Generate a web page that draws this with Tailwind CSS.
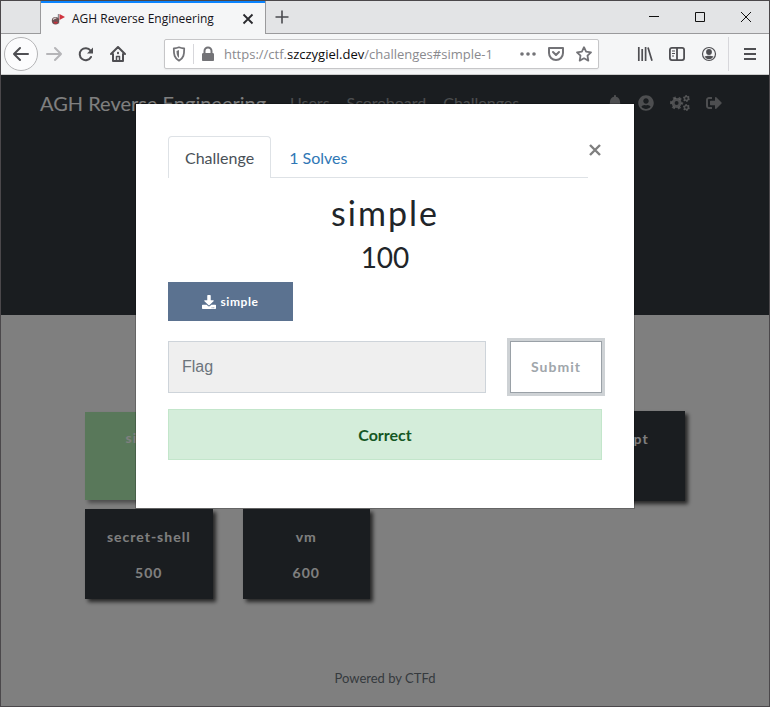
<!DOCTYPE html>
<html lang="en">
<head>
<meta charset="utf-8">
<meta name="viewport" content="width=device-width, initial-scale=1">
<title>AGH Reverse Engineering</title>
<script src="https://cdn.jsdelivr.net/npm/@tailwindcss/browser@4"></script>
</head>
<body class="flex min-h-screen flex-col border border-[#4b484b] bg-white font-['Lato',sans-serif] text-base text-[#212529]">

<!-- Browser chrome -->
<header class="font-['Open_Sans',sans-serif]">
  <div class="flex h-[33px] bg-[#e3e4e6]">
    <div class="w-10 border-r border-b border-[#9a9a9c]"></div>
    <div class="flex w-56 items-center border-t-2 border-[#0a84ff] bg-[#f5f6f7] pr-[7px] pl-[9px]">
      <svg class="mr-[6px] h-4 w-4" viewBox="0 0 16 16" aria-hidden="true"><path d="M8.500 3v9.500" stroke="#8c8c90" stroke-width="1.400"/><path d="M9.500 3l5.500 3-5.500 3z" fill="#d0343f"/><circle cx="5.500" cy="9.700" r="3.700" fill="#6a5254"/><path d="M3.300 8.800a2.500 2.500 0 0 1 3-1.500" stroke="#d8d0d0" stroke-width="1.300" fill="none"/><path d="M4 11.200c1 .8 2.500.8 3.300-.2" stroke="#c4303c" stroke-width="1.500" fill="none"/></svg>
      <span class="flex-1 text-xs whitespace-nowrap text-[#15141a]">AGH Reverse Engineering</span>
      <button aria-label="Close tab" class="p-1"><svg class="h-3 w-3" viewBox="0 0 12 12" fill="none" stroke="#2a2a2e" stroke-width="1.800"><path d="M1.500 1.500l9 9M10.500 1.500l-9 9"/></svg></button>
    </div>
    <div class="flex flex-1 items-center border-b border-l border-[#9a9a9c] pl-2">
      <button aria-label="New tab"><svg class="h-4 w-4" viewBox="0 0 16 16" fill="none" stroke="#4a4a4f" stroke-width="1.600"><path d="M8 1.500v13M1.500 8h13"/></svg></button>
      <div class="ml-auto flex">
        <button aria-label="Minimize" class="flex w-[46px] justify-center"><svg class="h-[10px] w-[10px]" viewBox="0 0 10 10" stroke="#111"><path d="M0 4.500h10"/></svg></button>
        <button aria-label="Maximize" class="flex w-[46px] justify-center"><svg class="h-[10px] w-[10px]" viewBox="0 0 10 10" fill="none" stroke="#111"><path d="M.5.5h9v9h-9z"/></svg></button>
        <button aria-label="Close window" class="flex w-[46px] justify-center"><svg class="h-[10px] w-[10px]" viewBox="0 0 10 10" stroke="#111"><path d="M0 0l10 10M10 0L0 10"/></svg></button>
      </div>
    </div>
  </div>
  <div class="flex h-[41px] items-center border-b border-[#ccc] bg-[#f5f6f7] pr-[11px] pl-[3px] text-[#4f4f53]">
    <button aria-label="Back" class="flex h-[34px] w-[34px] items-center justify-center rounded-full border border-[#b4b4b6] bg-[#fcfcfd]"><svg class="h-4 w-4" viewBox="0 0 16 16" fill="none" stroke="currentColor" stroke-width="2" stroke-linecap="round" stroke-linejoin="round"><path d="M1 8h14M7 2L1 8l6 6"/></svg></button>
    <button aria-label="Forward" class="flex w-8 justify-center text-[#b5b5b8]"><svg class="h-4 w-4" viewBox="0 0 16 16" fill="none" stroke="currentColor" stroke-width="2" stroke-linecap="round" stroke-linejoin="round"><path d="M1 8h14M9 2l6 6-6 6"/></svg></button>
    <button aria-label="Reload" class="flex w-8 justify-center"><svg class="h-4 w-4" viewBox="0 0 16 16" fill="none" stroke="currentColor" stroke-width="2" stroke-linecap="round"><path d="M13 11a6 6 0 1 1-.5-6.500"/><path d="M15 1.500v6H9z" fill="currentColor" stroke="none"/></svg></button>
    <button aria-label="Home" class="flex w-8 justify-center"><svg class="h-4 w-4" viewBox="0 0 16 16" fill="none" stroke="currentColor" stroke-width="2" stroke-linecap="round" stroke-linejoin="round"><path d="M1 8l7-7 7 7M3 8v7h10V8"/><path d="M6.500 15v-4.500h3V15" stroke-width="1.500"/><path d="M8 6.800v.4"/></svg></button>
    <div class="mr-[30px] ml-[30px] flex h-[30px] min-w-0 flex-1 items-center rounded-xs border border-[#c6c6c8] bg-white px-[6px] text-[#737377] shadow-xs">
      <svg class="h-4 w-4 shrink-0" viewBox="0 0 16 16" fill="none" stroke="currentColor" stroke-width="1.800" stroke-linejoin="round"><path d="M8 1.300c2 .9 3.500 1.100 5.200 1.200 0 6-.5 9.500-5.200 12.200C3.300 12 2.800 8.500 2.800 2.500 4.500 2.400 6 2.200 8 1.300z"/><path d="M8 4v8c-2-1.500-2.500-4-2.500-7z" fill="currentColor" stroke="none"/></svg>
      <span class="mx-[6px] h-5 w-px shrink-0 bg-[#d7d7db]"></span>
      <svg class="h-4 w-4 shrink-0" viewBox="0 0 16 16" fill="currentColor"><path d="M3.500 7V5a4.500 4.500 0 0 1 9 0v2c1 0 1.500.5 1.500 1.500V14c0 .7-.5 1-1 1H3c-.5 0-1-.3-1-1V8.500C2 7.500 2.500 7 3.500 7zm2 0h5V5a2.500 2.500 0 0 0-5 0z"/></svg>
      <div role="textbox" aria-label="Address" contenteditable="true" class="ml-2 min-w-0 flex-1 truncate pt-px text-[13px] text-[#8a8a8e]">https://ctf.<span class="text-[#0c0c0d]">szczygiel.dev</span>/challenges#simple-1</div>
      <div class="flex items-center gap-3">
        <button aria-label="Page actions"><svg class="h-4 w-4" viewBox="0 0 16 16" fill="currentColor"><circle cx="2" cy="8" r="1.800"/><circle cx="8" cy="8" r="1.800"/><circle cx="14" cy="8" r="1.800"/></svg></button>
        <button aria-label="Save to Pocket"><svg class="h-4 w-4" viewBox="0 0 16 16" fill="none" stroke="currentColor" stroke-width="2" stroke-linecap="round" stroke-linejoin="round"><path d="M1 2h14v5A7 7 0 0 1 1 7zM5 6l3 3 3-3"/></svg></button>
        <button aria-label="Bookmark"><svg class="h-4 w-4" viewBox="0 0 16 16" fill="none" stroke="currentColor" stroke-width="1.800" stroke-linejoin="round"><path d="M8 1.200l2.100 4.400 4.900.7-3.500 3.400.8 4.900L8 12.300l-4.300 2.300.8-4.900L1 6.300l4.900-.7z"/></svg></button>
      </div>
    </div>
    <div class="flex items-center gap-4 pl-2">
      <button aria-label="Library"><svg class="h-4 w-4" viewBox="0 0 16 16" fill="none" stroke="currentColor" stroke-width="1.700"><path d="M1.800 1v14M5.200 3v12M8.600 1v14M11 1.500l4 13.300"/></svg></button>
      <button aria-label="Sidebar"><svg class="h-4 w-4" viewBox="0 0 16 16" fill="none" stroke="currentColor" stroke-width="1.800"><rect x=".9" y="1.900" width="14.200" height="12.200" rx="2"/><path d="M8 2v12"/><path d="M3 5h3M3 7.500h3M3 10h2" stroke-width="1"/></svg></button>
      <button aria-label="Account"><svg class="h-4 w-4" viewBox="0 0 16 16" fill="currentColor"><circle cx="8" cy="8" r="6.500" fill="none" stroke="currentColor" stroke-width="1.200"/><circle cx="8" cy="6" r="2.900"/><path d="M3.500 10.300c2 0 2.500-.6 4.500-.6s2.500.6 4.500.6c-1 2-2.500 3-4.500 3s-3.500-1-4.500-3z"/></svg></button>
    </div>
    <span class="ml-[11px] h-[34px] w-px bg-[#d7d7db]"></span>
    <button aria-label="Menu" class="ml-[13px]"><svg class="h-4 w-4" viewBox="0 0 16 16" stroke="currentColor" stroke-width="2"><path d="M2 3h12M2 8h12M2 13h12"/></svg></button>
  </div>
</header>

<!-- Page -->
<div class="relative flex flex-1 flex-col">
  <div class="h-60 bg-[#343a40]">
    <nav class="flex h-14 items-center pr-[47px] pl-[39px] text-white/50">
      <a href="#" class="mr-6 text-xl text-white">AGH Reverse Engineering</a>
      <a href="#" class="mr-[17px]">Users</a>
      <a href="#" class="mr-[17px]">Scoreboard</a>
      <a href="#">Challenges</a>
      <div class="ml-auto flex items-center gap-4">
        <a href="#" aria-label="Notifications"><svg class="h-4 w-[14px]" viewBox="0 0 448 512" fill="currentColor"><path d="M224 512c35.320 0 63.970-28.650 63.970-64H160.030c0 35.350 28.650 64 63.970 64zm215.390-149.710c-19.320-20.760-55.470-51.990-55.470-154.290 0-77.700-54.480-139.900-127.940-155.160V32c0-17.670-14.320-32-31.980-32s-31.980 14.330-31.980 32v20.840C118.560 68.100 64.080 130.300 64.080 208c0 102.300-36.150 133.530-55.470 154.290-6 6.450-8.660 14.160-8.610 21.710.11 16.400 12.980 32 32.100 32h383.800c19.120 0 32-15.600 32.100-32 .05-7.550-2.610-15.270-8.610-21.710z"/></svg></a>
        <a href="#" aria-label="Profile"><svg class="h-4 w-4" viewBox="0 0 496 512" fill="currentColor"><path d="M248 8C111 8 0 119 0 256s111 248 248 248 248-111 248-248S385 8 248 8zm0 96c48.600 0 88 39.400 88 88s-39.400 88-88 88-88-39.400-88-88 39.400-88 88-88zm0 344c-58.700 0-111.300-26.600-146.500-68.200 18.800-35.400 55.600-59.800 98.500-59.800 2.400 0 4.800.4 7.100 1.100 13 4.200 26.600 6.900 40.900 6.900 14.300 0 28-2.700 40.900-6.900 2.300-.7 4.700-1.100 7.100-1.100 42.900 0 79.700 24.400 98.500 59.800C359.300 421.400 306.700 448 248 448z"/></svg></a>
        <a href="#" aria-label="Settings"><svg class="h-4 w-5" viewBox="0 0 20 16" fill="none" stroke="currentColor"><circle cx="6.600" cy="8" r="3.500" stroke-width="3"/><circle cx="6.600" cy="8" r="5.500" stroke-width="2.200" stroke-dasharray="2.900 2.860" stroke-dashoffset="1.450"/><circle cx="16.400" cy="3.500" r="1.900" stroke-width="1.500"/><circle cx="16.400" cy="3.500" r="2.900" stroke-width="1.200" stroke-dasharray="1.600 1.437"/><circle cx="16.400" cy="12.500" r="1.900" stroke-width="1.500"/><circle cx="16.400" cy="12.500" r="2.900" stroke-width="1.200" stroke-dasharray="1.600 1.437"/></svg></a>
        <a href="#" aria-label="Logout"><svg class="h-4 w-4" viewBox="0 0 512 512" fill="currentColor"><path d="M497 273L329 441c-15 15-41 4.500-41-17v-96H152c-13.300 0-24-10.700-24-24v-96c0-13.300 10.700-24 24-24h136V88c0-21.400 25.900-32 41-17l168 168c9.300 9.400 9.300 24.600 0 34zM192 436v-40c0-6.600-5.400-12-12-12H96c-17.700 0-32-14.300-32-32V160c0-17.700 14.300-32 32-32h84c6.600 0 12-5.400 12-12V76c0-6.600-5.400-12-12-12H96c-53 0-96 43-96 96v192c0 53 43 96 96 96h84c6.600 0 12-5.400 12-12z"/></svg></a>
      </div>
    </nav>
  </div>

  <main class="grid grid-cols-4 gap-x-[30px] gap-y-2 px-[84px] pt-24 text-sm font-bold tracking-[1px] text-white">
    <button class="flex h-[88px] flex-col items-center justify-center gap-4 self-center bg-[#b2f0b4] shadow-[3px_3px_4px_rgba(0,0,0,0.4)]"><span>simple</span><span>100</span></button>
    <button class="col-start-4 flex h-[90px] flex-col items-center justify-center gap-4 bg-[#343a40] pt-[2px] shadow-[3px_3px_4px_rgba(0,0,0,0.7)]"><span>decrypt</span><span>400</span></button>
    <button class="col-start-1 flex h-[90px] flex-col items-center justify-center gap-4 bg-[#343a40] pt-[2px] shadow-[3px_3px_4px_rgba(0,0,0,0.7)]"><span>secret-shell</span><span>500</span></button>
    <button class="flex h-[90px] flex-col items-center justify-center gap-4 bg-[#343a40] pt-[2px] shadow-[3px_3px_4px_rgba(0,0,0,0.7)]"><span>vm</span><span>600</span></button>
  </main>

  <footer class="mt-auto pb-[18px] text-center text-[13px] leading-5 text-[#6c757d]"><a href="#">Powered by CTFd</a></footer>

  <!-- Challenge dialog -->
  <div class="absolute inset-0 flex items-start justify-center bg-black/50 pt-7">
    <div role="dialog" aria-modal="true" aria-labelledby="challenge-name" class="w-full max-w-[500px] border border-black/20 bg-white bg-clip-padding px-8 pt-8 pb-12">
      <div class="flex items-start">
        <div role="tablist" class="flex flex-1 border-b border-[#dee2e6]">
          <button role="tab" aria-selected="true" class="-mb-px h-[42px] rounded-t border border-b-0 border-[#dee2e6] bg-white px-4 pt-px leading-6 text-[#495057]">Challenge</button>
          <button role="tab" aria-selected="false" class="px-[18px] pt-[2px] leading-6 text-[#2f77b5]">1 Solves</button>
        </div>
        <button aria-label="Close" class="mt-2 flex w-[14px] justify-center"><svg class="h-3 w-3" viewBox="0 0 12 12" stroke="#7f7f7f" stroke-width="2.400"><path d="M1 1l10 10M11 1L1 11"/></svg></button>
      </div>
      <h2 id="challenge-name" class="mt-4 text-center text-[34px] leading-[38px] tracking-[2px]">simple</h2>
      <h3 class="mt-[5px] text-center text-[28px] leading-10">100</h3>
      <a href="#" class="mt-[5px] flex h-[39px] w-[125px] items-center justify-center gap-1 bg-[#5b7290] text-xs font-bold tracking-wider text-white"><svg class="h-[14px] w-[14px]" viewBox="0 0 512 512" fill="currentColor"><path d="M216 0h80c13.300 0 24 10.700 24 24v168h87.700c17.800 0 26.700 21.500 14.100 34.100L269.700 378.300c-7.500 7.500-19.800 7.500-27.300 0L90.100 226.100c-12.600-12.600-3.700-34.100 14.100-34.100H192V24c0-13.300 10.700-24 24-24zm296 376v112c0 13.300-10.700 24-24 24H24c-13.300 0-24-10.700-24-24V376c0-13.300 10.700-24 24-24h146.700l49 49c20.100 20.100 52.500 20.100 72.600 0l49-49H488c13.300 0 24 10.700 24 24zm-124 88c0-11-9-20-20-20s-20 9-20 20 9 20 20 20 20-9 20-20zm64 0c0-11-9-20-20-20s-20 9-20 20 9 20 20 20 20-9 20-20z"/></svg>simple</a>
      <form class="mt-5 flex gap-6">
        <input type="text" aria-label="Flag" placeholder="Flag" class="h-[52px] min-w-0 flex-1 border border-[#ced4da] bg-[#efefef] px-[13px] font-['Liberation_Sans',sans-serif] placeholder:text-[#6c757d]">
        <button type="button" class="h-[52px] w-[92px] border border-[#9aa1a7] bg-white text-sm font-bold tracking-[1px] text-[#a0a6ab] ring-3 ring-[#ced2d5]">Submit</button>
      </form>
      <div role="alert" class="mt-4 flex h-[51px] items-center justify-center border border-[#c3e6cb] bg-[#d4edda] font-bold text-[#155724]">Correct</div>
    </div>
  </div>
</div>
</body>
</html>
